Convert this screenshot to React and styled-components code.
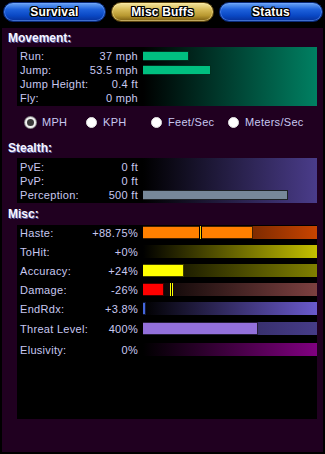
import React from "react";
import styled, { createGlobalStyle } from "styled-components";

const Global = createGlobalStyle`
  html, body { margin: 0; padding: 0; background: #000; }
  body { font-family: "Liberation Sans", Arial, sans-serif; }
`;

const Page = styled.div`
  width: 325px;
  height: 454px;
  background: #000;
  overflow: hidden;
`;

const Tabs = styled.div`
  display: flex;
  gap: 5px;
  padding: 2px 0 0 3px;
  height: 20px;
`;

const Tab = styled.div`
  width: ${(p) => p.$w}px;
  height: 20px;
  box-sizing: border-box;
  border-radius: 10px;
  border: 1px solid ${(p) => (p.$active ? "#5a4410" : "#0a2a78")};
  background: ${(p) =>
    p.$active
      ? "linear-gradient(180deg, #f4e6a0 0%, #d8bc58 35%, #b89830 70%, #7a5c10 100%)"
      : "linear-gradient(180deg, #6aa4f4 0%, #1e62dc 35%, #0a48c4 70%, #06309a 100%)"};
  box-shadow: inset 0 0 0 1px ${(p) => (p.$active ? "rgba(255,240,170,0.5)" : "rgba(120,170,255,0.5)")};
  display: flex;
  align-items: center;
  justify-content: center;
  color: #fff;
  font-weight: bold;
  font-size: 12px;
  letter-spacing: 0.2px;
  text-shadow: 1px 0 #000, -1px 0 #000, 0 1px #000, 0 -1px #000, 1px 1px #000,
    -1px -1px #000, 1px -1px #000, -1px 1px #000;
`;

const Panel = styled.div`
  margin: 6px 0 0 2px;
  width: 321px;
  height: 424px;
  background: #200020;
  box-sizing: border-box;
  padding: 0 6px 0 15px;
  display: flex;
  flex-direction: column;
`;

const Title = styled.div`
  margin-left: -9px;
  height: ${(p) => p.$h}px;
  display: flex;
  align-items: center;
  color: #f6f6ff;
  font-weight: bold;
  font-size: 12px;
  text-shadow: 1px 1px 0 #5a5aa0;
`;

const Box = styled.div`
  width: 300px;
  box-sizing: border-box;
  padding: ${(p) => p.$pad || "2px 0 1px 0"};
  background: ${(p) => p.$bg || "#000"};
  display: flex;
  flex-direction: column;
  gap: ${(p) => p.$gap || 0}px;
  height: ${(p) => (p.$h ? `${p.$h}px` : "auto")};
`;

const Row = styled.div`
  display: grid;
  grid-template-columns: 118px 174px;
  column-gap: 5px;
  padding-left: 3px;
  height: ${(p) => p.$h}px;
  align-items: center;
  margin-top: ${(p) => p.$mt || 0}px;
`;

const Cell = styled.div`
  display: flex;
  justify-content: space-between;
  color: #c8c8f0;
  font-size: 11px;
  letter-spacing: 0.3px;
  white-space: nowrap;
`;

const Track = styled.div`
  position: relative;
  height: ${(p) => p.$h}px;
  background: ${(p) => p.$bg || "transparent"};
`;

const Bar = styled.div`
  height: 100%;
  box-sizing: border-box;
  background: ${(p) => p.$color};
  border: 1px solid rgba(0, 0, 0, 0.75);
  border-left: none;
`;

const Marker = styled.div`
  position: absolute;
  top: 0;
  bottom: 0;
  width: 3px;
  background: ${(p) => p.$bg};
`;

const Radios = styled.div`
  height: 32px;
  display: grid;
  grid-template-columns: 61px 65px 77px auto;
  align-items: center;
  padding-left: 23px;
  margin-left: -15px;
`;

const Radio = styled.label`
  display: flex;
  align-items: center;
  gap: 6px;
  color: #c8c8f0;
  font-size: 11px;
  letter-spacing: 0.3px;
`;

const Dot = styled.span`
  width: 11px;
  height: 11px;
  box-sizing: border-box;
  border-radius: 50%;
  background: ${(p) => (p.$on ? "#3a3a3a" : "#fff")};
  border: ${(p) => (p.$on ? "2px solid #f0f0f0" : "1px solid #e0e0e0")};
  box-shadow: ${(p) => (p.$on ? "0 0 0 1px #888" : "none")};
`;

const movement = [
  ["Run:", "37 mph", 46],
  ["Jump:", "53.5 mph", 68],
  ["Jump Height:", "0.4 ft", 0],
  ["Fly:", "0 mph", 0],
];

const stealth = [
  ["PvE:", "0 ft", 0],
  ["PvP:", "0 ft", 0],
  ["Perception:", "500 ft", 145],
];

const misc = [
  { label: "Haste:", value: "+88.75%", w: 110, color: "#ff8000", bg: "linear-gradient(90deg, #000, #c84400)", marks: [{ x: 56, bg: "linear-gradient(90deg,#000 33%,#ffd000 33% 66%,#000 66%)" }] },
  { label: "ToHit:", value: "+0%", w: 0, bg: "linear-gradient(90deg, #000, #c4c000)" },
  { label: "Accuracy:", value: "+24%", w: 41, color: "#ffff00", bg: "linear-gradient(90deg, #000, #808000)" },
  { label: "Damage:", value: "-26%", w: 21, color: "#ff0000", bg: "linear-gradient(90deg, #000, #7c4040)", marks: [{ x: 27, bg: "linear-gradient(90deg,#ffff00 33%,#000 33% 66%,#ffff00 66%)" }] },
  { label: "EndRdx:", value: "+3.8%", w: 3, color: "#4466dd", bg: "linear-gradient(90deg, #000, #6a5acd)" },
  { label: "Threat Level:", value: "400%", w: 115, color: "#9370db", bg: "linear-gradient(90deg, #1e1a3c, #463c88)", mt: 1 },
  { label: "Elusivity:", value: "0%", w: 0, bg: "linear-gradient(90deg, #000, #800080)", mt: 2 },
];

function StatRow({ label, value, w, color, h, barH, bg, marks, mt }) {
  return (
    <Row $h={h} $mt={mt}>
      <Cell>
        <span>{label}</span>
        <span>{value}</span>
      </Cell>
      <Track $h={barH} $bg={bg}>
        {w > 0 && <Bar $color={color} style={{ width: w }} />}
        {(marks || []).map((m, i) => (
          <Marker key={i} $bg={m.bg} style={{ left: m.x }} />
        ))}
      </Track>
    </Row>
  );
}

export default function App() {
  return (
    <Page>
      <Global />
      <Tabs>
        <Tab $w={103}>Survival</Tab>
        <Tab $w={103} $active>Misc Buffs</Tab>
        <Tab $w={104}>Status</Tab>
      </Tabs>
      <Panel>
        <Title $h={19}>Movement:</Title>
        <Box $bg="linear-gradient(90deg, #000 126px, #008062)">
          {movement.map(([l, v, w]) => (
            <StatRow key={l} label={l} value={v} w={w} color="#00bf80" h={14} barH={10} />
          ))}
        </Box>
        <Radios>
          <Radio><Dot $on />MPH</Radio>
          <Radio><Dot />KPH</Radio>
          <Radio><Dot />Feet/Sec</Radio>
          <Radio><Dot />Meters/Sec</Radio>
        </Radios>
        <Title $h={20}>Stealth:</Title>
        <Box $bg="linear-gradient(90deg, #000 126px, #4a3c8a)">
          {stealth.map(([l, v, w]) => (
            <StatRow key={l} label={l} value={v} w={w} color="#778899" h={14} barH={10} />
          ))}
        </Box>
        <Title $h={22}>Misc:</Title>
        <Box $pad="1px 0 0 0" $gap={6} $h={194}>
          {misc.map((m) => (
            <StatRow key={m.label} {...m} h={13} barH={13} />
          ))}
        </Box>
      </Panel>
    </Page>
  );
}
